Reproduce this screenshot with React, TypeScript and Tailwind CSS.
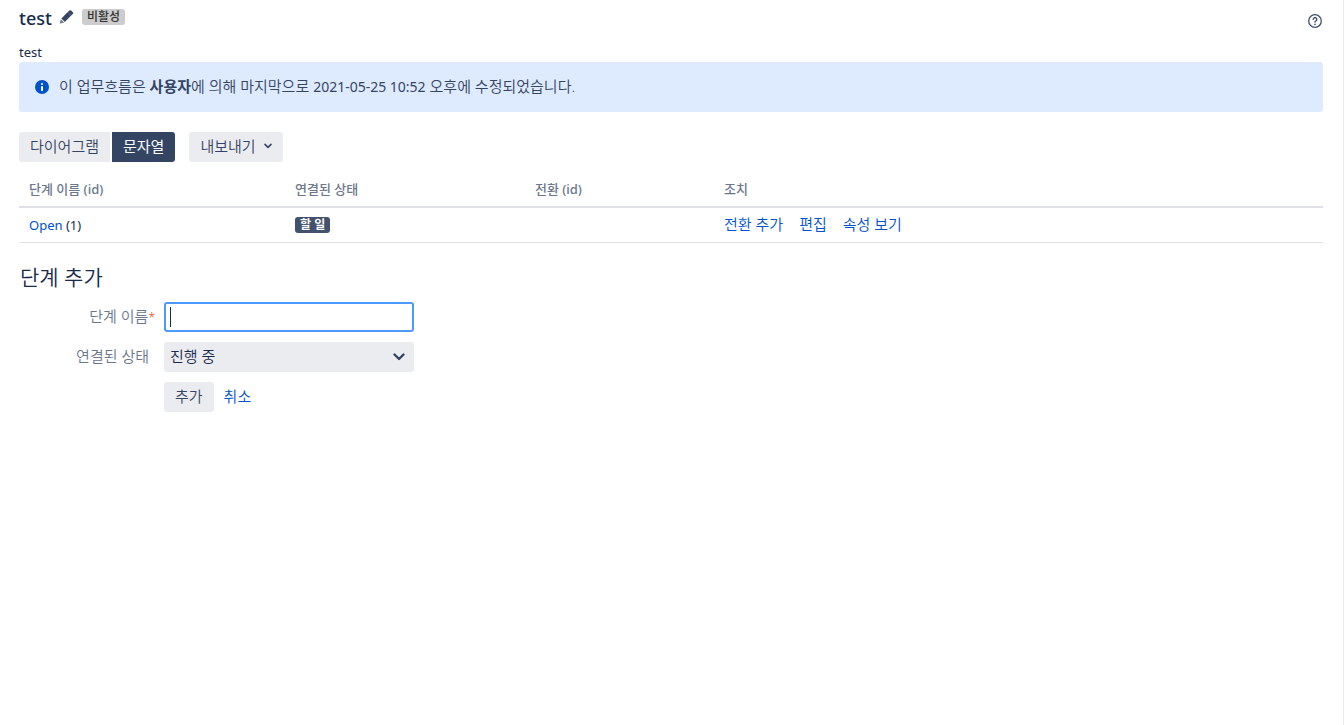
import type { ReactNode } from 'react';

function PencilIcon() {
  return (
    <svg aria-hidden="true" viewBox="0 0 16 16" className="h-4 w-4" fill="currentColor">
      <path d="M9.8 3.1 3.4 9.5l3.4 3.4 6.4-6.4z" />
      <path d="m9.8 3.1 1.5-1.5a1.3 1.3 0 0 1 1.8 0l1.7 1.7a1.3 1.3 0 0 1 0 1.8l-1.6 1.4z" />
      <path d="m2.8 10.2-1 3.8c-.1.4.2.6.5.5l3.8-1z" opacity=".7" />
    </svg>
  );
}

function InfoIcon() {
  return (
    <svg aria-hidden="true" viewBox="0 0 14 14" className="h-3.5 w-3.5 shrink-0">
      <circle cx="7" cy="7" r="7" fill="#0052cc" />
      <circle cx="7" cy="4" r="1" fill="#fff" />
      <rect x="6" y="6" width="2" height="5" rx=".8" fill="#fff" />
    </svg>
  );
}

function HelpIcon() {
  return (
    <svg aria-hidden="true" viewBox="0 0 14 14" className="h-3.5 w-3.5" fill="none" stroke="currentColor" strokeLinecap="round">
      <circle cx="7" cy="7" r="6.3" strokeWidth="1.3" />
      <path d="M5.2 5.3a1.8 1.8 0 1 1 2.7 1.6c-.6.3-.9.6-.9 1.2" strokeWidth="1.4" />
      <circle cx="7" cy="10.3" r=".85" fill="currentColor" stroke="none" />
    </svg>
  );
}

function Chevron({ className }: { className: string }) {
  return (
    <svg aria-hidden="true" viewBox="0 0 12 8" className={className} fill="none" stroke="currentColor" strokeWidth="2.4" strokeLinecap="round" strokeLinejoin="round">
      <path d="m1.5 1.5 4.5 4.5 4.5-4.5" />
    </svg>
  );
}

function TextLink({ children }: { children: ReactNode }) {
  return (
    <a href="#" className="text-[#0052cc] hover:underline">
      {children}
    </a>
  );
}

const actions = ['전환 추가', '편집', '속성 보기'];

export default function App() {
  return (
    <main className="min-h-screen border-r border-[#ebecf0] bg-white pr-5 pb-6 pl-[19px] font-['Noto_Sans','Noto_Sans_CJK_KR',sans-serif] text-[15px] leading-5 font-[350] text-[#172b4d]">
      <header className="flex items-start justify-between pt-1.5">
        <div className="flex items-center">
          <h1 className="text-lg leading-6 font-medium">test</h1>
          <div className="mb-0.5 flex items-center">
            <button type="button" aria-label="편집" className="ml-1.5 text-[#344563]">
              <PencilIcon />
            </button>
            <span className="ml-2 flex h-4 items-center rounded-[3px] bg-[#ccc] px-[5px] text-xs font-medium text-[#333]">
              비활성
            </span>
          </div>
        </div>
        <a href="#" aria-label="도움말" className="mt-2 mr-px text-[#42526e]">
          <HelpIcon />
        </a>
      </header>

      <p className="mt-3 text-[13px] font-normal">test</p>

      <div className="flex min-h-[50px] items-center gap-2.5 rounded-[3px] bg-[#deebff] px-4 text-[#344563]">
        <InfoIcon />
        <p className="pb-0.5">
          이 업무흐름은 <strong className="font-bold">사용자</strong>에 의해 마지막으로{' '}
          <time dateTime="2021-05-25T22:52" className="text-sm font-normal">
            2021-05-25 10:52
          </time>{' '}
          오후에 수정되었습니다.
        </p>
      </div>

      <div className="mt-5 flex">
        <button type="button" className="h-[30px] rounded-l-[3px] bg-[#ebecf0] px-[11px] pb-0.5 text-[#344563]">
          다이어그램
        </button>
        <button type="button" aria-pressed="true" className="ml-0.5 h-[30px] rounded-r-[3px] bg-[#344563] px-[11px] pb-0.5 font-normal text-white">
          문자열
        </button>
        <button type="button" className="ml-3.5 flex h-[30px] items-center gap-2 rounded-[3px] bg-[#ebecf0] px-[11px] pb-0.5 text-[#344563]">
          내보내기
          <Chevron className="h-1.5 w-2" />
        </button>
      </div>

      <table className="mt-2.5 w-full table-fixed border-collapse text-left">
        <colgroup>
          <col className="w-[20.4%]" />
          <col className="w-[18.4%]" />
          <col className="w-[14.5%]" />
          <col />
        </colgroup>
        <thead>
          <tr className="border-b-2 border-[#dfe1e6] text-[13px] leading-5 text-[#6b778c]">
            <th className="h-[35px] px-2.5 font-medium">단계 이름 (id)</th>
            <th className="px-2.5 font-medium">연결된 상태</th>
            <th className="px-2.5 font-medium">전환 (id)</th>
            <th className="px-2.5 font-medium">조치</th>
          </tr>
        </thead>
        <tbody>
          <tr className="border-b border-[#dfe1e6]">
            <td className="h-[35px] px-2.5 text-[13px] font-normal">
              <TextLink>Open</TextLink> (1)
            </td>
            <td className="px-2.5">
              <span className="flex h-4 w-fit items-center rounded-[3px] bg-[#42526e] px-[5px] text-xs font-bold text-white">
                할 일
              </span>
            </td>
            <td className="px-2.5" />
            <td className="px-2.5 pb-0.5">
              <ul className="flex gap-4">
                {actions.map((action) => (
                  <li key={action}>
                    <TextLink>{action}</TextLink>
                  </li>
                ))}
              </ul>
            </td>
          </tr>
        </tbody>
      </table>

      <form onSubmit={(event) => event.preventDefault()}>
        <h2 className="mt-[19px] pl-px text-[21px] leading-[30px]">단계 추가</h2>
        <div className="mt-2.5 grid grid-cols-[130px_250px] items-center gap-x-[15px] gap-y-2.5">
          <label htmlFor="step-name" className="-mr-1.5 pb-0.5 text-right text-[#6b778c]">
            단계 이름<span className="text-xs text-[#de350b]">*</span>
          </label>
          <div className="relative flex">
            <input
              id="step-name"
              type="text"
              autoFocus
              required
              className="h-[30px] w-full rounded-[3px] border-2 border-[#4c9aff] bg-white px-1 caret-transparent outline-none"
            />
            <span aria-hidden="true" className="absolute top-[5px] left-1.5 h-5 w-px bg-[#172b4d]" />
          </div>
          <label htmlFor="linked-status" className="pb-0.5 text-right text-[#6b778c]">
            연결된 상태
          </label>
          <div className="relative flex">
            <select id="linked-status" className="h-[30px] w-full appearance-none rounded-[3px] bg-[#ebecf0] px-1.5 pb-0.5 text-[#172b4d]">
              <option>진행 중</option>
            </select>
            <Chevron className="pointer-events-none absolute top-[11px] right-[9px] h-2 w-3 text-[#344563]" />
          </div>
          <div className="col-start-2 flex items-center gap-2.5">
            <button type="submit" className="h-[30px] rounded-[3px] bg-[#ebecf0] px-[11px] pb-0.5 text-[#344563]">
              추가
            </button>
            <span className="pb-0.5">
              <TextLink>취소</TextLink>
            </span>
          </div>
        </div>
      </form>
    </main>
  );
}
